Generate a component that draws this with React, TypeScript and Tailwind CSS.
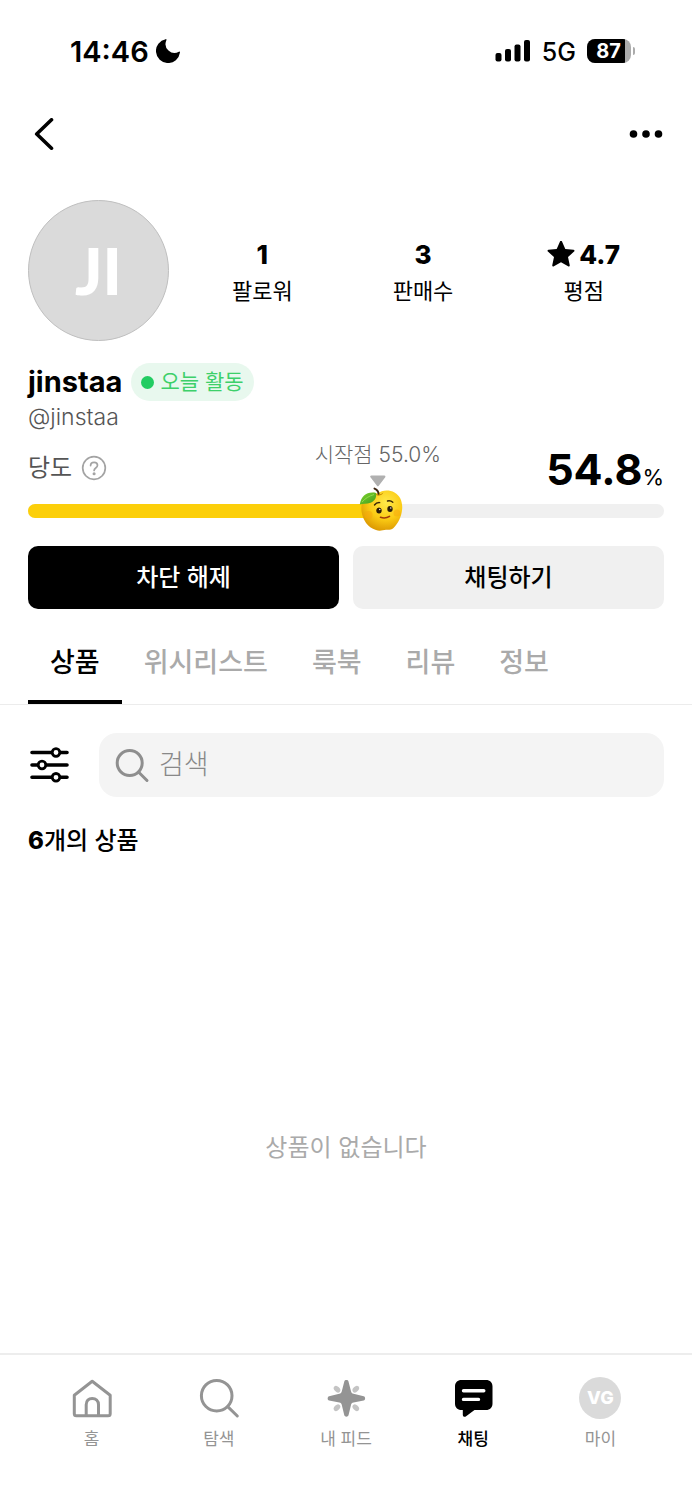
import { ReactNode, useState } from "react";
import clsx from "clsx";

const START = 55.0;
const CURRENT = 54.8;

const TABS = ["상품", "위시리스트", "룩북", "리뷰", "정보"];

function StatusBar() {
  return (
    <div className="flex h-[102px] items-center justify-between pr-[57px] pl-[70px]">
      <div className="flex items-center gap-[7px]">
        <span className="pt-[2px] text-[29px] leading-8 font-semibold">14:46</span>
        <svg className="size-6" viewBox="3 3 18 18" fill="currentColor">
          <path d="M20.985 13.2a9.050 9.050 0 1 1-10.700-10.100c.5-.1.750.4.500.850a6.700 6.700 0 0 0 9.400 8.600c.5-.25.950.1.800.650" />
        </svg>
      </div>
      <div className="flex items-center gap-[11px]">
        <svg className="h-6 w-9" viewBox="0 0 36 24" fill="currentColor">
          <rect x="0.500" y="14" width="6" height="8.500" rx="2" />
          <rect x="10" y="10" width="6" height="12.500" rx="2" />
          <rect x="19.500" y="5.500" width="6" height="17" rx="2" />
          <rect x="29" y="1" width="6" height="21.500" rx="2" />
        </svg>
        <span className="pt-[2px] text-[25px] leading-8 font-medium">5G</span>
        <div className="flex items-center gap-[2px]">
          <div className="h-6 w-11 overflow-hidden rounded-lg bg-[#ababab]">
            <div className="h-6 w-[38px] bg-black pl-[5px] text-center text-xl leading-6 font-bold text-white">
              87
            </div>
          </div>
          <div className="h-2 w-[2px] rounded-r-full bg-[#ababab]" />
        </div>
      </div>
    </div>
  );
}

function Header() {
  return (
    <header className="flex h-16 items-center justify-between px-7">
      <button type="button" aria-label="뒤로">
        <svg
          className="size-8"
          viewBox="0 0 32 32"
          fill="none"
          stroke="currentColor"
          strokeWidth="3.6"
          strokeLinecap="round"
          strokeLinejoin="round"
        >
          <path d="M23.5 1.8 8.7 16l14.8 14.2" />
        </svg>
      </button>
      <button type="button" aria-label="더보기">
        <svg className="h-8 w-9" viewBox="0 0 36 32" fill="currentColor">
          <circle cx="5.5" cy="16" r="3.8" />
          <circle cx="18" cy="16" r="3.8" />
          <circle cx="30.5" cy="16" r="3.8" />
        </svg>
      </button>
    </header>
  );
}

function Stat({ label, children }: { label: string; children: ReactNode }) {
  return (
    <div className="flex flex-1 flex-col items-center">
      <div className="flex h-9 items-center gap-1 text-[26px] font-extrabold">
        {children}
      </div>
      <div className="text-[22px] leading-9">{label}</div>
    </div>
  );
}

function Apple() {
  return (
    <svg className="h-[46px] w-11" viewBox="0 0 44 46" fill="none">
      <defs>
        <radialGradient id="apple" cx="0.6" cy="0.3" r="0.75">
          <stop offset="0" stopColor="#ffe94a" />
          <stop offset="0.55" stopColor="#fbcb14" />
          <stop offset="1" stopColor="#d99400" />
        </radialGradient>
        <linearGradient id="leaf" x1="0" y1="0" x2="1" y2="1">
          <stop offset="0" stopColor="#7fd52f" />
          <stop offset="1" stopColor="#3f9a1c" />
        </linearGradient>
      </defs>
      <path
        d="M18.5 6.5C23 3 30 2.500 35.500 5.500c6 3.300 8.300 10 7.600 17-.7 7.500-4.200 14-8.600 18.500-2.500 2.300-5 1.600-7.500 1.800-3.500.5-6.500 1.700-10 .2C8.500 40.500 3.800 32.500 2.600 25 1.300 16 5 8.500 11.500 6.300c2.500-.8 5-.8 7 .2Z"
        fill="url(#apple)"
      />
      <path
        d="M15.500 6.200c2.500 1.800 6 1.800 9-.6-1.700 3.700-7 4.200-9 .6Z"
        fill="#c98a00"
      />
      <path
        d="M19.500 6.800c-.2-2.700-1.300-4.200-4-5.200"
        stroke="#3b2410"
        strokeWidth="2"
        strokeLinecap="round"
      />
      <path
        d="M.8 17.500C2.300 8.500 8.500 4.200 17 6c1 5.500-2.300 8.500-5.500 9.800-3.800 1.400-7.500.6-10.700 1.700Z"
        fill="url(#leaf)"
      />
      <path d="M3 15c3-3.500 7-6 12-7.500" stroke="#a5e85c" strokeWidth="0.7" />
      <circle cx="9.500" cy="28" r="4" fill="#f5a60c" opacity="0.5" />
      <circle cx="38" cy="26" r="3.500" fill="#f5a60c" opacity="0.5" />
      <ellipse cx="20" cy="23.500" rx="2.700" ry="3" fill="#2b1c08" />
      <ellipse cx="31" cy="22" rx="2.700" ry="3" fill="#2b1c08" />
      <circle cx="20.800" cy="22.500" r="0.700" fill="#fff" />
      <circle cx="31.800" cy="21" r="0.700" fill="#fff" />
      <path
        d="M15.500 18c1.300-1.800 3.200-2.600 5.200-2.400M28.500 14c2-.5 3.900 0 5.300 1.300"
        stroke="#3b2808"
        strokeWidth="1.400"
        strokeLinecap="round"
      />
      <path
        d="M21.500 30.300c3 1.100 6.300.8 9-.9"
        stroke="#a23a0c"
        strokeWidth="1.600"
        strokeLinecap="round"
      />
    </svg>
  );
}

function Sweetness() {
  return (
    <section className="relative mt-1">
      <div className="flex h-[69px] items-center justify-between">
        <div className="flex items-center gap-[9px] pb-1">
          <span className="text-2xl leading-9 text-[#555]">당도</span>
          <button type="button" aria-label="당도 안내" className="text-[#a3a3a3]">
            <svg
              className="size-[26px]"
              viewBox="0 0 26 26"
              fill="none"
              stroke="currentColor"
              strokeWidth="1.700"
              strokeLinecap="round"
            >
              <circle cx="13" cy="13" r="11.300" />
              <path d="M9.600 10.600c0-2 1.500-3.300 3.500-3.300s3.400 1.200 3.400 3c0 2.600-3.400 2.700-3.400 5.100" />
              <circle cx="13.100" cy="18.800" r="0.700" fill="currentColor" />
            </svg>
          </button>
        </div>
        <p className="flex items-baseline">
          <span className="text-[43px] leading-none font-bold">
            {CURRENT.toFixed(1)}
          </span>
          <span className="text-[22px] leading-none">%</span>
        </p>
      </div>
      <div className="relative h-[14px] rounded-full bg-[#f0f0f0]">
        <div
          className="h-full rounded-l-full bg-[#fccf0a]"
          style={{ width: `${CURRENT}%` }}
        />
        <div
          className="absolute top-1/2 -translate-x-[18px] -translate-y-6"
          style={{ left: `${CURRENT}%` }}
        >
          <Apple />
        </div>
      </div>
      <div
        className="absolute top-1 flex -translate-x-1/2 flex-col items-center"
        style={{ left: `${START}%` }}
      >
        <span className="text-[21px] leading-8 font-light whitespace-nowrap text-[#666]">
          시작점 {START.toFixed(1)}%
        </span>
        <svg className="mt-1 h-3 w-4" viewBox="0 0 16 12" fill="#b0b0b0">
          <path d="M1.500.5h13c1 0 1.500 1 .9 1.800l-6.500 8.500c-.5.700-1.300.7-1.800 0L.6 2.300C0 1.500.5.5 1.500.5Z" />
        </svg>
      </div>
    </section>
  );
}

function Tabs() {
  const [active, setActive] = useState(TABS[0]);
  return (
    <div role="tablist" className="mt-[14px] flex border-b border-[#ececec] px-7">
      {TABS.map((tab) => (
        <button
          key={tab}
          type="button"
          role="tab"
          aria-selected={tab === active}
          onClick={() => setActive(tab)}
          className={clsx(
            "h-[81px] border-b-4 px-[22px] pt-1 text-[27px] font-medium",
            tab === active
              ? "border-black text-black"
              : "border-transparent text-[#aaa]"
          )}
        >
          {tab}
        </button>
      ))}
    </div>
  );
}

function Filters() {
  return (
    <div className="mt-7 flex items-center gap-[29px] px-7">
      <button type="button" aria-label="필터">
        <svg
          className="h-9 w-[42px]"
          viewBox="0 0 42 36"
          fill="#fff"
          stroke="currentColor"
          strokeWidth="3.600"
          strokeLinecap="round"
        >
          <path d="M4 5.500h35M4 18h35M4 30.300h35" />
          <circle cx="28" cy="5.500" r="3.800" strokeWidth="2.800" />
          <circle cx="14" cy="18" r="3.800" strokeWidth="2.800" />
          <circle cx="28" cy="30.300" r="3.800" strokeWidth="2.800" />
        </svg>
      </button>
      <label className="flex h-16 flex-1 items-center gap-[9px] rounded-[18px] bg-[#f4f4f4] px-4">
        <svg
          className="size-[35px] shrink-0"
          viewBox="0 0 35 35"
          fill="none"
          stroke="#8e8e8e"
          strokeWidth="3"
          strokeLinecap="round"
        >
          <circle cx="14.700" cy="15" r="12.500" />
          <path d="m23.500 24 8.500 8.500" />
        </svg>
        <input
          type="search"
          aria-label="검색"
          placeholder="검색"
          className="h-10 w-full bg-transparent text-[27px] font-light outline-none placeholder:text-[#888]"
        />
      </label>
    </div>
  );
}

function NavItem({
  label,
  active,
  children,
}: {
  label: string;
  active?: boolean;
  children: ReactNode;
}) {
  return (
    <a
      href="#"
      aria-current={active ? "page" : undefined}
      className={clsx(
        "flex flex-1 flex-col items-center gap-2 text-[17px] leading-6",
        active ? "font-medium text-black" : "text-[#949494]"
      )}
    >
      {children}
      {label}
    </a>
  );
}

function BottomNav() {
  return (
    <nav className="flex border-t-2 border-[#ededed] px-7 pt-[22px] pb-[49px]">
      <NavItem label="홈">
        <svg
          className="size-[42px]"
          viewBox="0 0 42 42"
          fill="none"
          stroke="currentColor"
          strokeWidth="3"
          strokeLinecap="round"
          strokeLinejoin="round"
        >
          <path d="M3.300 18.300 21.200 4.300l18 14v18.400c0 1.300-.8 2.100-2.100 2.100H5.400c-1.300 0-2.100-.8-2.100-2.100Z" />
          <path d="M15.200 38.500V27.800c0-4 2.400-6.300 6-6.300s6.300 2.300 6.300 6.300v10.700" />
        </svg>
      </NavItem>
      <NavItem label="탐색">
        <svg
          className="size-[42px]"
          viewBox="0 0 42 42"
          fill="none"
          stroke="currentColor"
          strokeWidth="3"
          strokeLinecap="round"
        >
          <circle cx="18.700" cy="18.700" r="15.300" />
          <path d="m29.700 29.700 9.600 9.300" />
        </svg>
      </NavItem>
      <NavItem label="내 피드">
        <svg className="size-[42px]" viewBox="0 0 42 42" fill="currentColor">
          <g opacity="0.55">
            <ellipse cx="12" cy="12.200" rx="2.600" ry="3.800" transform="rotate(-45 12 12.200)" />
            <ellipse cx="30.800" cy="12.200" rx="2.600" ry="3.800" transform="rotate(45 30.800 12.200)" />
            <ellipse cx="12" cy="30.700" rx="2.600" ry="3.800" transform="rotate(45 12 30.700)" />
            <ellipse cx="30.800" cy="30.700" rx="2.600" ry="3.800" transform="rotate(-45 30.800 30.700)" />
          </g>
          <path
            d="M19.300 4.500c.5-1.900 3.700-1.900 4.200 0l2.500 9.800c.4 1.400 1.100 2.100 2.500 2.500l10.200 2.400c1.900.5 1.900 3.900 0 4.300l-10.200 2c-1.400.3-2.200 1.100-2.500 2.500l-2.500 10.200c-.5 1.900-3.700 1.900-4.200 0L16.800 28c-.3-1.400-1.100-2.200-2.500-2.500l-10.200-2c-1.900-.4-1.900-3.800 0-4.300l10.200-2.400c1.400-.4 2.100-1.100 2.500-2.500Z"
            stroke="#fff"
            strokeWidth="1.200"
            paintOrder="stroke"
          />
        </svg>
      </NavItem>
      <NavItem label="채팅" active>
        <svg className="size-[42px]" viewBox="0 0 42 42" fill="currentColor">
          <path d="M9.500 3H34c4 0 6.500 2.500 6.500 6.500v17c0 4-2.500 6.500-6.500 6.500H22.500l-8.400 6.200c-1.600 1.100-3.300.4-3.300-1.500V33H9.500C5.500 33 3 30.500 3 26.500v-17C3 5.500 5.500 3 9.500 3Z" />
          <path
            d="M11.500 13.800h20.300M11.500 22.400h15"
            stroke="#fff"
            strokeWidth="3.400"
            strokeLinecap="round"
          />
        </svg>
      </NavItem>
      <NavItem label="마이">
        <span className="flex size-[42px] items-center justify-center rounded-full bg-[#dadada] text-lg font-extrabold text-white">
          VG
        </span>
      </NavItem>
    </nav>
  );
}

export default function App() {
  return (
    <div className="flex min-h-screen flex-col bg-white font-['Inter','Noto_Sans_CJK_KR',sans-serif] text-black">
      <StatusBar />
      <Header />
      <main className="flex flex-1 flex-col pt-[34px]">
        <div className="px-7">
          <div className="flex items-center gap-[13px]">
            <div className="flex size-[141px] items-center justify-center rounded-full border border-[#bfbfbf] bg-[#dadada] font-['Lato',sans-serif] text-[64px] leading-none font-black text-white">
              JI
            </div>
            <div className="flex flex-1 pt-1">
              <Stat label="팔로워">1</Stat>
              <Stat label="판매수">3</Stat>
              <Stat label="평점">
                <svg className="size-7" viewBox="0 0 28 28" fill="currentColor">
                  <path d="M13 .4c.4-.9 1.600-.9 2 0l3.300 7.500 8.200.8c1 .1 1.300 1.200.6 1.900l-6.100 5.500 1.700 8c.2 1-.7 1.700-1.600 1.200L14 21.200l-7.100 4.100c-.9.500-1.800-.2-1.600-1.200l1.700-8L.9 10.600c-.7-.7-.4-1.800.6-1.900l8.200-.8Z" />
                </svg>
                4.7
              </Stat>
            </div>
          </div>
          <div className="mt-[22px] flex items-center gap-[9px]">
            <h1 className="text-[29px] leading-9 font-bold">jinstaa</h1>
            <span className="flex h-[38px] items-center gap-[6px] rounded-full bg-[#e8f8ee] px-[10px] text-[21px] text-[#3dd06a]">
              <span className="size-[13px] rounded-full bg-[#22cc62]" />
              오늘 활동
            </span>
          </div>
          <p className="mt-[2px] text-[23px] leading-7 font-light text-[#555]">
            @jinstaa
          </p>
          <Sweetness />
          <div className="mt-7 flex gap-[14px] text-2xl font-medium">
            <button type="button" className="h-[63px] flex-1 rounded-[10px] bg-black text-white">
              차단 해제
            </button>
            <button type="button" className="h-[63px] flex-1 rounded-[10px] bg-[#f0f0f0]">
              채팅하기
            </button>
          </div>
        </div>
        <Tabs />
        <Filters />
        <p className="mt-[26px] px-7 text-2xl leading-9 font-medium">
          <span className="font-extrabold">6</span>개의 상품
        </p>
        <div className="flex flex-1 items-center justify-center pt-[84px] text-2xl text-[#aaa]">
          상품이 없습니다
        </div>
      </main>
      <BottomNav />
    </div>
  );
}
